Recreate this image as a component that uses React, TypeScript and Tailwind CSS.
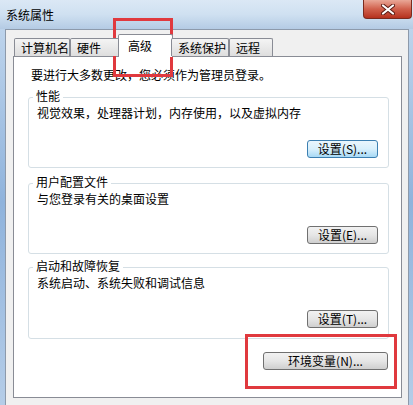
import React from 'react';

type Group = {
  title: string;
  text: string;
  button: string;
  primary?: boolean;
  height: string;
  gap: string;
};

const groups: Group[] = [
  { title: '性能', text: '视觉效果，处理器计划，内存使用，以及虚拟内存', button: '设置(S)...', primary: true, height: 'h-[71px]', gap: 'mt-[14px]' },
  { title: '用户配置文件', text: '与您登录有关的桌面设置', button: '设置(E)...', height: 'h-[71px]', gap: 'mt-[15px]' },
  { title: '启动和故障恢复', text: '系统启动、系统失败和调试信息', button: '设置(T)...', height: 'h-[72px]', gap: 'mt-[13px]' },
];

const tabs = [
  { label: '计算机名', w: 'w-[56px]' },
  { label: '硬件', w: 'w-[50px]' },
  { label: '高级', w: 'w-[55px]', active: true },
  { label: '系统保护', w: 'w-[58px]' },
  { label: '远程', w: 'w-[44px]' },
];

function WinButton({ label, primary, className = '' }: { label: string; primary?: boolean; className?: string }) {
  return (
    <div
      className={`h-[18px] flex items-center justify-center rounded-[3px] border text-[12px] leading-[16px] text-black ${
        primary
          ? 'border-[#3c7fb1] bg-gradient-to-b from-[#eaf6fd] via-[#d9f0fc] to-[#a7d9f5]'
          : 'border-[#707070] bg-gradient-to-b from-[#f2f2f2] via-[#e6e6e6] to-[#cfcfcf]'
      } ${className}`}
    >
      {label}
    </div>
  );
}

function GroupBox({ title, text, button, primary, height, gap }: Group) {
  return (
    <div className={`relative w-[361px] ${height} ${gap} rounded-[3px] border border-[#d5dfe5] pt-[7px] pl-[8px]`}>
      {/* legend sits on the border */}
      <span className="absolute -top-[10px] left-[4px] bg-white px-[3px]">{title}</span>
      <div>{text}</div>
      <div className="flex justify-end pr-[10px] mt-[19px]">
        <WinButton label={button} primary={primary} className="w-[71px]" />
      </div>
    </div>
  );
}

export default function App() {
  return (
    <div className="relative w-[413px] h-[405px] overflow-hidden flex flex-col bg-gradient-to-b from-[#c5d9ee] via-[#8fb3dc] to-[#b5cde8] font-['Noto_Sans_CJK_SC',sans-serif] text-[12px] leading-[16px] text-black">
      {/* title bar */}
      <div className="h-[29px] flex items-start bg-gradient-to-b from-[#dbe8f5] via-[#cfe0f1] to-[#b4cbe4]">
        <span className="pl-[6px] pt-[7px]">系统属性</span>
        <div className="ml-auto mr-[1px] w-[49px] h-[19px] flex items-center justify-center rounded-b-[4px] border border-t-0 border-[#7a2a1e] bg-gradient-to-b from-[#e9a797] via-[#d0604c] to-[#b5301d]">
          <svg width="14" height="11" viewBox="0 0 14 11">
            <path d="M2 1.5 L12 9.5 M12 1.5 L2 9.5" stroke="#5a1a12" strokeWidth="4" strokeLinecap="round" />
            <path d="M2 1.5 L12 9.5 M12 1.5 L2 9.5" stroke="#ffffff" strokeWidth="2.2" strokeLinecap="round" />
          </svg>
        </div>
      </div>

      {/* dialog body */}
      <div className="flex-1 ml-[5px] mr-[4px] bg-[#f0f0f0] border border-b-0 border-[#8d9aab] pt-[8px] pl-[7px] pr-[6px]">
        <div className="relative z-10 flex items-end h-[18px] pl-[1px]">
          {tabs.map((t) =>
            t.active ? (
              <div
                key={t.label}
                className={`${t.w} h-[23px] -mx-[2px] -mb-[1px] border border-b-0 border-[#898c95] rounded-t-[2px] bg-white pl-[9px] pt-[3px]`}
              >
                {t.label}
              </div>
            ) : (
              <div
                key={t.label}
                className={`${t.w} h-[18px] border border-b-0 border-[#898c95] rounded-t-[2px] bg-gradient-to-b from-[#f4f4f4] to-[#dedede] pl-[6px] pt-[1px]`}
              >
                {t.label}
              </div>
            )
          )}
        </div>

        <div className="h-[342px] border border-[#898c95] bg-white pt-[10px] pl-[14px]">
          <div className="pl-[3px]">要进行大多数更改，您必须作为管理员登录。</div>
          {groups.map((g) => (
            <GroupBox key={g.title} {...g} />
          ))}
          <div className="w-[361px] flex justify-end pr-[1px] mt-[13px]">
            <WinButton label="环境变量(N)..." className="w-[125px]" />
          </div>
        </div>
      </div>

      {/* red annotation boxes */}
      <div className="absolute left-[113px] top-[18px] w-[60px] h-[59px] border-[3px] border-[#e0393e]" />
      <div className="absolute left-[245px] top-[334px] w-[152px] h-[55px] border-[3px] border-[#e0393e]" />
    </div>
  );
}
